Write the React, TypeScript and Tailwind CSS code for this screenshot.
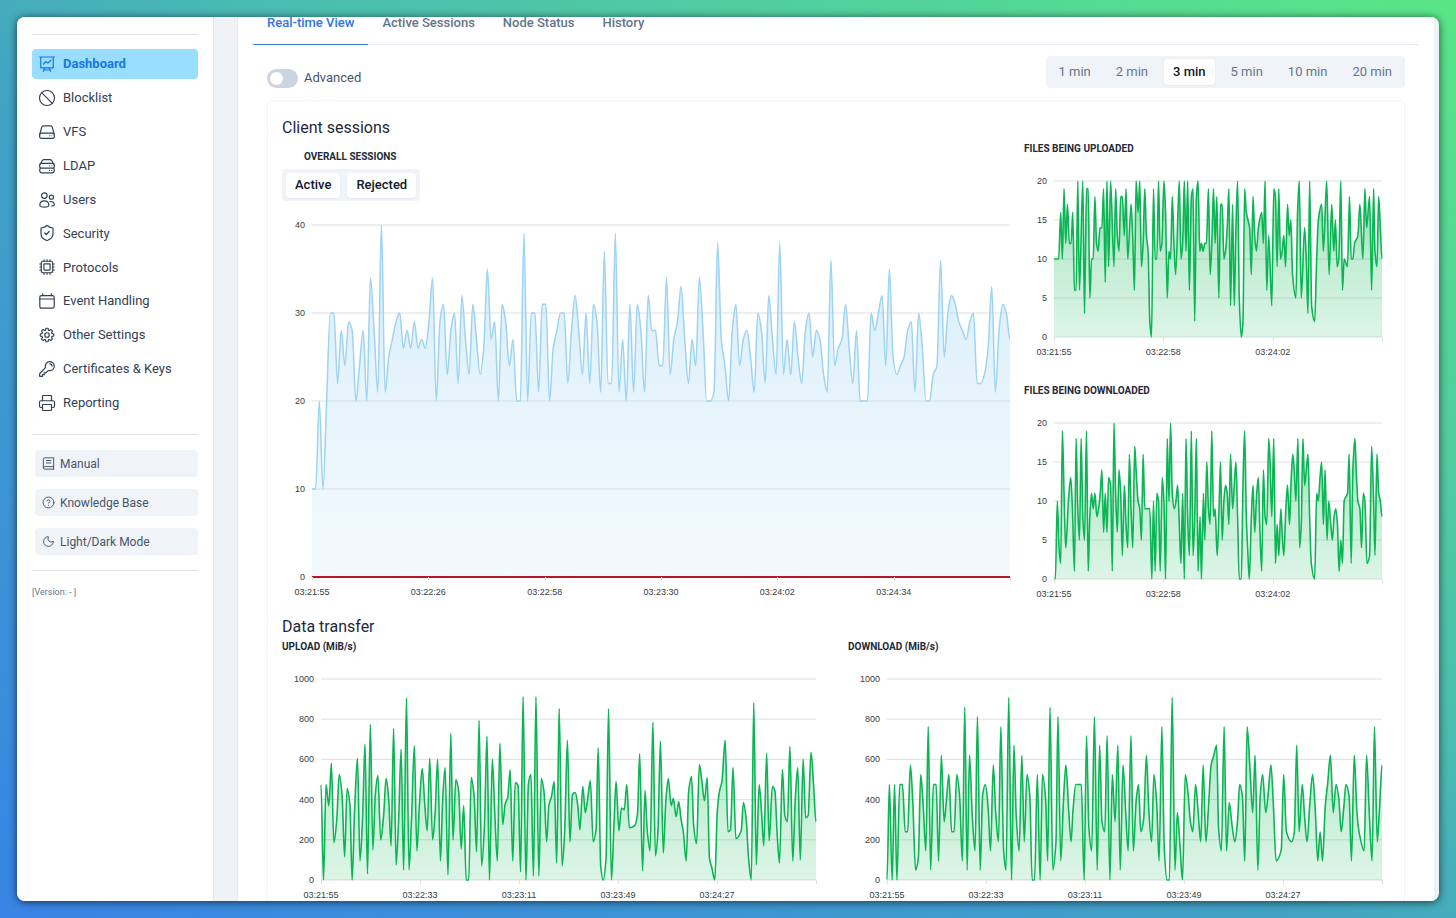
import { useState } from "react";
import type { ComponentType, ReactNode } from "react";
import { ShieldCheck, Printer, CircleHelp, Moon, Ban } from "lucide-react";
import { HiOutlineCog8Tooth, HiOutlineKey } from "react-icons/hi2";

type IconProps = { className?: string };

function Glyph({ children, className }: { children: ReactNode; className?: string }) {
  return (
    <svg viewBox="0 0 24 24" fill="none" stroke="currentColor" strokeWidth="1.8" strokeLinecap="round" strokeLinejoin="round" className={className} aria-hidden="true">
      {children}
    </svg>
  );
}

const BoardIcon = (p: IconProps) => (
  <Glyph {...p}>
    <path d="M.9 1.5h22.2M2.6 1.5v16.2h18.8V1.5M6.8 12l3.2-3.6 3.4 2.2 4.8-4.4M9 17.7 6.4 23M15 17.7l2.6 5.3M7.6 21h8.8" />
  </Glyph>
);
const DriveIcon = (p: IconProps) => (
  <Glyph {...p}>
    <rect x="1" y="13.6" width="22" height="8" rx="2.6" />
    <path d="M1.2 15.4 4 5a3 3 0 0 1 2.9-2.2h10.2A3 3 0 0 1 20 5l2.8 10.4M15.6 17.6h.1M19.2 17.6h.1" />
  </Glyph>
);
const DrivesIcon = (p: IconProps) => (
  <Glyph {...p}>
    <rect x="1" y="8" width="22" height="7.2" rx="2.6" />
    <path d="M2 9 5 3.8A3 3 0 0 1 7.5 2.4h9A3 3 0 0 1 19 3.8L22 9M2.2 15.2C.4 17 .6 22.2 3.6 22.2h16.8c3 0 3.2-5.2 1.4-7M15.6 11.6h.1M19.2 11.6h.1M15.6 18.7h.1M19.2 18.7h.1" />
  </Glyph>
);
const PeopleIcon = (p: IconProps) => (
  <Glyph {...p}>
    <circle cx="8" cy="5.4" r="4.2" />
    <path d="M8 13.2c4 0 6.8 2.5 6.8 6.2 0 2-2 3.2-6.8 3.2s-6.8-1.200-6.8-3.2c0-3.7 2.8-6.2 6.8-6.2Z" />
    <circle cx="18.6" cy="7.8" r="3.1" />
    <path d="M16.5 14.4c3.6-.8 6.5 1.6 6.5 4.4 0 1.6-1.4 2.2-4.4 2.2" />
  </Glyph>
);
const ChipIcon = (p: IconProps) => (
  <Glyph {...p}>
    <rect x="3.4" y="3.4" width="17.2" height="17.2" rx="2.6" />
    <rect x="7.4" y="7.4" width="9.2" height="9.2" rx=".8" />
    <path d="M7.5 3V1.2M12 3V1.2M16.5 3V1.2M7.5 22.8V21M12 22.8V21M16.5 22.8V21M3 7.5H1.2M3 12H1.2M3 16.5H1.2M22.8 7.5H21M22.8 12H21M22.8 16.5H21" />
  </Glyph>
);
const CalendarIcon = (p: IconProps) => (
  <Glyph {...p}>
    <rect x="1.2" y="3.8" width="21.6" height="19" rx="2.4" />
    <path d="M1.2 9h21.6M5.6 3.8V1.2M18.4 3.8V1.2" />
  </Glyph>
);
const BookIcon = (p: IconProps) => (
  <Glyph {...p}>
    <path d="M21.5 18V1.5H5A2.5 2.5 0 0 0 2.5 4v16A2.5 2.5 0 0 0 5 22.5h16.5M2.5 20A2.5 2.5 0 0 1 5 17.8h16.5v4.7M8 6.5h8.5M8 11h8.5" />
  </Glyph>
);

// the library icons carry a margin inside their box, so they are drawn a little larger
const NAV: { label: string; icon: ComponentType<any>; large?: boolean }[] = [
  { label: "Dashboard", icon: BoardIcon },
  { label: "Blocklist", icon: Ban, large: true },
  { label: "VFS", icon: DriveIcon },
  { label: "LDAP", icon: DrivesIcon },
  { label: "Users", icon: PeopleIcon },
  { label: "Security", icon: ShieldCheck, large: true },
  { label: "Protocols", icon: ChipIcon },
  { label: "Event Handling", icon: CalendarIcon },
  { label: "Other Settings", icon: HiOutlineCog8Tooth, large: true },
  { label: "Certificates & Keys", icon: HiOutlineKey, large: true },
  { label: "Reporting", icon: Printer, large: true },
];

const HELP: { label: string; icon: ComponentType<any> }[] = [
  { label: "Manual", icon: BookIcon },
  { label: "Knowledge Base", icon: CircleHelp },
  { label: "Light/Dark Mode", icon: Moon },
];

const TABS = ["Real-time View", "Active Sessions", "Node Status", "History"];
const RANGES = ["1 min", "2 min", "3 min", "5 min", "10 min", "20 min"];

type Point = [number, number];

// "tick:value" pairs
const parse = (s: string): Point[] => s.trim().split(/\s+/).map((p) => p.split(":").map(Number) as Point);

const SESSIONS: Point[] = [
  10, 10, 20, 10, 20, 30, 30, 22, 28, 24, 29, 28, 20, 24, 28, 20, 34, 28, 21, 40, 21, 25, 27, 29, 30, 26, 28, 26, 29, 26, 27, 26,
  29, 34, 20, 29, 31, 23, 28, 30, 22, 32, 27, 23, 31, 27, 23, 26, 35, 27, 29, 20, 31, 29, 24, 27, 20, 20, 39, 20, 30, 30, 21, 31,
  31, 20, 26, 28, 30, 30, 22, 28, 32, 28, 23, 30, 22, 31, 29, 21, 37, 22, 22, 39, 21, 27, 20, 31, 21, 31, 28, 21, 32, 28, 28, 24,
  24, 34, 23, 27, 29, 33, 27, 22, 27, 24, 34, 28, 20, 20, 21, 38, 27, 24, 20, 28, 31, 24, 27, 28, 25, 21, 30, 28, 22, 32, 27, 23,
  38, 23, 27, 23, 29, 25, 22, 28, 30, 25, 28, 27, 23, 21, 36, 24, 26, 27, 31, 26, 22, 28, 20, 20, 20, 30, 28, 30, 32, 24, 35, 25,
  23, 24, 25, 28, 29, 21, 30, 26, 20, 20, 23, 24, 36, 25, 30, 32, 31, 29, 28, 27, 29, 30, 22, 22, 23, 26, 33, 21, 28, 31, 30, 27,
].map((v, i): Point => [i, v]);

const FILES_UP = parse(`
105:10 119:10 125:16 130:10 135:19 140:12 145:17 151:12 156:12 161:16 166:6 171:6 176:20 181:6 191:20 196:3 202:19 207:19
212:5 217:10 222:10 227:18 232:12 237:11 242:14 248:14 253:19 258:7 263:20 268:9 274:20 284:9 289:19 294:13 299:11 304:18
309:18 315:13 320:19 325:10 335:17 340:13 345:6 350:20 356:16 361:20 366:9 371:12 376:19 381:13 386:11 391:2 396:0 402:19
407:10 412:10 417:20 422:11 427:12 433:20 438:16 443:5 448:11 453:10 458:18 463:12 468:8 479:20 484:10 489:12 494:20 499:11
504:20 509:6 515:18 520:19 525:2 530:18 535:20 540:11 545:12 550:11 555:12 560:12 566:19 571:8 576:12 581:19 586:12 591:18
597:5 602:17 607:17 612:10 617:11 622:14 627:19 632:4 638:17 643:4 648:14 653:20 658:5 664:0 669:2 674:19 679:16 684:15
689:14 694:8 699:18 704:13 709:11 715:14 725:16 730:12 735:20 740:6 746:13 755:4 761:19 766:18 771:9 776:19 781:10 786:11
791:13 796:9 802:17 807:13 812:15 817:8 827:5 832:16 837:20 843:5 853:14 858:10 863:3 868:20 874:4 883:2 889:10 894:15
904:17 909:11 919:20 926:8 934:17 940:11 945:15 950:9 955:10 961:20 966:6 971:10 981:9 987:18 992:10 997:10 1002:12 1012:13
1018:17 1027:10 1033:19 1038:14 1047:18 1053:6 1059:19 1063:11 1069:9 1074:18 1079:14 1084:10`);

const FILES_DOWN = parse(`
105:0 109:0 115:10 120:4 125:2 130:19 135:11 140:4 148:10 155:13 160:9 166:1 171:18 176:9 181:5 186:18 191:8 196:5 202:19
207:1 212:8 217:11 222:9 227:11 233:8 238:9 243:11 248:14 253:6 258:11 263:6 268:13 274:12 279:1 284:20 289:11 294:6 299:14
304:11 309:3 315:12 320:7 325:4 330:16 335:9 340:4 346:17 350:14 356:10 361:9 366:5 371:16 376:9 391:9 397:0 402:10 407:1
412:11 417:10 422:1 428:13 433:10 438:0 443:18 448:10 453:20 458:11 464:9 469:10 474:12 479:7 484:2 489:11 494:0 499:18
504:8 509:3 515:19 520:3 525:8 530:18 535:1 541:8 545:0 551:11 555:5 561:15 566:9 571:7 576:19 581:8 586:9 592:3 597:8
602:15 607:5 612:10 617:12 622:11 627:7 632:16 638:9 643:12 648:15 653:8 658:0 664:0 669:12 674:19 679:8 683:4 688:0 694:8
699:12 704:6 710:11 715:13 719:7 725:1 730:14 735:8 740:7 746:18 750:15 755:8 761:18 766:2 771:7 776:3 782:9 787:5 791:3
797:9 802:12 808:7 813:13 818:16 822:14 827:10 833:18 838:4 843:7 848:18 853:12 858:14 863:16 868:8 873:2 883:0 889:11
894:10 899:13 904:15 909:7 914:14 920:5 925:10 931:7 936:5 941:8 946:9 951:7 956:1 961:5 966:2 971:10 981:11 986:16 992:2
997:14 1003:18 1008:13 1012:10 1018:9 1023:4 1028:11 1033:10 1039:2 1047:3 1053:17 1059:10 1063:3 1069:16 1074:11 1079:10 1084:8`);

const UPLOAD = parse(`
145:475 152:0 159:475 167:370 174:580 181:185 189:300 196:525 204:420 211:115 218:455 226:370 232:0 239:350 247:605 254:95
261:300 268:675 275:30 283:775 290:150 297:430 304:520 312:200 320:320 327:505 334:410 341:170 348:755 355:75 362:300 369:650
376:50 384:905 391:50 398:300 406:668 413:145 420:370 428:555 435:380 442:245 449:605 457:200 464:330 471:600 479:95 485:390
492:560 500:25 508:730 514:200 522:500 530:440 537:155 544:370 551:0 558:0 565:510 573:420 580:140 587:795 594:70 602:270
609:715 616:0 624:600 631:330 638:95 645:680 653:275 660:380 667:410 674:550 681:95 688:485 696:470 703:40 710:912 718:0
725:480 732:525 739:20 746:912 754:20 761:505 769:430 776:190 782:370 790:420 797:490 804:85 811:853 819:70 826:230 834:695
841:190 848:425 856:435 863:370 869:250 877:465 884:335 891:410 898:495 906:190 914:250 920:658 927:70 934:0 942:110 949:853
957:0 964:270 970:490 978:245 985:358 993:350 1000:475 1007:260 1022:270 1030:330 1036:628 1044:45 1051:445 1057:250 1065:145
1073:785 1080:120 1087:240 1094:690 1102:135 1109:390 1116:505 1124:370 1130:405 1138:315 1145:390 1152:300 1158:240 1166:95
1173:440 1181:515 1187:270 1195:180 1203:575 1210:490 1217:395 1225:510 1231:110 1238:60 1246:0 1253:340 1259:440 1266:490
1275:695 1283:240 1290:250 1297:560 1305:205 1320:245 1326:385 1334:300 1340:120 1348:0 1355:882 1362:75 1370:475 1377:330
1383:170 1391:630 1398:195 1407:465 1414:445 1421:210 1427:85 1435:550 1442:320 1449:290 1456:665 1464:95 1471:400 1478:560
1485:100 1493:600 1500:310 1507:320 1515:635 1522:480 1529:290`);

const DOWNLOAD = parse(`
132:0 138:475 145:0 151:475 157:0 164:475 171:475 178:240 184:240 191:572 197:390 204:50 211:110 217:525 223:380 230:145
236:762 242:50 249:475 256:475 262:95 269:620 276:290 282:400 288:525 295:240 301:240 308:525 315:420 322:95 328:860 334:50
340:620 347:320 354:145 360:812 367:50 373:420 380:475 387:360 393:145 400:572 406:340 413:190 419:762 426:150 432:50 439:908
446:0 452:670 458:310 465:145 472:620 478:190 485:525 492:420 498:0 504:0 511:525 518:0 524:525 532:400 537:95 543:860 550:50
558:190 563:812 570:95 577:400 583:572 590:350 596:190 601:350 608:475 622:475 629:0 635:717 641:260 648:145 655:812 662:50
668:670 674:290 681:240 687:717 694:0 700:525 707:290 714:670 720:50 727:572 734:330 740:145 747:717 753:145 760:390 766:475
772:240 779:300 786:620 792:350 799:190 805:525 812:380 818:95 825:762 831:160 838:0 844:0 851:908 858:50 864:335 871:160
877:0 884:525 891:430 897:290 903:240 910:475 916:350 923:190 929:572 936:190 943:380 949:570 956:620 963:670 968:260 975:145
982:762 988:145 995:385 1002:270 1009:190 1016:300 1021:475 1028:420 1034:95 1040:762 1047:560 1054:335 1060:620 1067:50
1073:420 1079:525 1087:335 1093:430 1100:572 1106:380 1113:95 1126:150 1132:525 1139:240 1152:190 1159:240 1165:670 1171:240
1179:475 1185:310 1191:190 1198:380 1205:525 1212:340 1218:95 1224:240 1230:95 1237:370 1243:480 1250:620 1257:335 1264:475
1271:410 1277:240 1284:370 1289:475 1297:420 1303:95 1310:620 1317:330 1323:230 1335:145 1341:620 1348:330 1355:95 1361:762
1368:190 1374:370 1380:572`);

// monotone cubic: flat tangents on every peak and valley
function linePath(points: Point[], max: number) {
  const x0 = points[0][0];
  const span = points[points.length - 1][0] - x0;
  const pts = points.map(([x, v]): Point => [((x - x0) / span) * 1000, 1000 - (v / max) * 1000]);
  const slope = (i: number) => (pts[i + 1][1] - pts[i][1]) / (pts[i + 1][0] - pts[i][0]);
  const tangents = pts.map((_, i) => {
    if (i === 0 || i === pts.length - 1) return 0;
    const a = slope(i - 1);
    const b = slope(i);
    return a * b <= 0 ? 0 : (2 * a * b) / (a + b);
  });
  let d = `M${pts[0][0]},${pts[0][1]}`;
  for (let i = 1; i < pts.length; i++) {
    const [xa, ya] = pts[i - 1];
    const [xb, yb] = pts[i];
    const h = (xb - xa) / 3;
    d += `C${(xa + h).toFixed(2)},${(ya + tangents[i - 1] * h).toFixed(2)} ${(xb - h).toFixed(2)},${(yb - tangents[i] * h).toFixed(2)} ${xb.toFixed(2)},${yb.toFixed(2)}`;
  }
  return d;
}

function AreaChart({ id, points, max, yLabels, xLabels, color, fade, stroke, plotClass, axisClass, indentClass, baseline }: {
  id: string; points: Point[]; max: number; yLabels: number[]; xLabels: string[];
  color: string; fade: [number, number, number]; stroke: number;
  plotClass: string; axisClass: string; indentClass: string; baseline?: string;
}) {
  const line = linePath(points, max);
  return (
    <div className="mt-6 font-['Liberation_Sans',Arial,sans-serif] text-[9px] leading-3 text-[#373d3f]">
      <div className="flex">
        <div className={`mr-[7px] flex shrink-0 flex-col justify-between ${axisClass}`}>
          {yLabels.map((y) => (
            <span key={y} className="flex h-0 items-center justify-end">{y}</span>
          ))}
        </div>
        <svg viewBox="0 0 1000 1000" preserveAspectRatio="none" className={`block w-full min-w-0 flex-1 overflow-visible ${plotClass}`} role="img" aria-label={id}>
          <defs>
            <linearGradient id={id} x1="0" y1="0" x2="0" y2="1000" gradientUnits="userSpaceOnUse">
              <stop offset="0" stopColor={color} stopOpacity={fade[0]} />
              <stop offset=".5" stopColor={color} stopOpacity={fade[1]} />
              <stop offset="1" stopColor={color} stopOpacity={fade[2]} />
            </linearGradient>
          </defs>
          {yLabels.map((y) => (
            <line key={y} x1="0" x2="1000" y1={1000 - (y / max) * 1000} y2={1000 - (y / max) * 1000} stroke="#e0e0e0" vectorEffect="non-scaling-stroke" />
          ))}
          <path d={`${line}L1000,1000L0,1000Z`} fill={`url(#${id})`} />
          <path d={line} fill="none" stroke={color} strokeWidth={stroke} strokeLinejoin="round" vectorEffect="non-scaling-stroke" />
          {baseline && <line x1="0" x2="1000" y1="1000" y2="1000" stroke={baseline} strokeWidth="2" vectorEffect="non-scaling-stroke" />}
        </svg>
      </div>
      <div className={indentClass}>
        <div className="flex h-1 justify-between">
          {[...xLabels, ""].map((t) => (
            <span key={t} className="-mr-px w-px bg-[#e0e0e0]" />
          ))}
        </div>
        <div className="mt-[5px] flex h-3 justify-between">
          {[...xLabels, ""].map((t) => (
            <span key={t} className="flex w-0 justify-center whitespace-nowrap">{t}</span>
          ))}
        </div>
      </div>
    </div>
  );
}

const GREEN = "#0ab653";
const GREEN_FADE: [number, number, number] = [0.5, 0.25, 0.14];

function ChartTitle({ children }: { children: ReactNode }) {
  return <h3 className="text-[10px] font-bold leading-4 text-[#1e293b]">{children}</h3>;
}

function FilesChart({ id, title, points }: { id: string; title: string; points: Point[] }) {
  return (
    <section className="mt-[25px]">
      <ChartTitle>{title}</ChartTitle>
      <AreaChart id={id} points={points} max={20} yLabels={[20, 15, 10, 5, 0]} xLabels={["03:21:55", "03:22:58", "03:24:02"]}
        color={GREEN} fade={GREEN_FADE} stroke={1.6} plotClass="h-[156px]" axisClass="w-[23px]" indentClass="pl-[30px]" />
    </section>
  );
}

function TransferChart({ id, title, points }: { id: string; title: string; points: Point[] }) {
  return (
    <section>
      <ChartTitle>{title}</ChartTitle>
      <AreaChart id={id} points={points} max={1000} yLabels={[1000, 800, 600, 400, 200, 0]}
        xLabels={["03:21:55", "03:22:33", "03:23:11", "03:23:49", "03:24:27"]}
        color={GREEN} fade={GREEN_FADE} stroke={1.6} plotClass="h-[201px]" axisClass="w-8" indentClass="pl-[39px]" />
    </section>
  );
}

function Sidebar() {
  return (
    <aside className="w-[197px] shrink-0 border-r border-[#e2e8f0] bg-white px-[15px] pt-[17px]">
      <hr className="border-[#dfe4ea]" />
      <nav className="mt-[14px] flex h-[369px] flex-col justify-between">
        {NAV.map(({ label, icon: Icon, large }, i) => (
          <a
            key={label}
            href="#"
            className={
              i === 0
                ? "flex h-[30px] items-center gap-2 rounded bg-[#99ddff] pl-[7px] text-[13px] font-bold text-[#1677e8]"
                : "flex h-[30px] items-center gap-2 rounded pl-[7px] text-[13px] text-[#334155]"
            }
          >
            <Icon className={large ? "-mx-px size-[18px] shrink-0" : "size-4 shrink-0"} strokeWidth={1.6} />
            {label}
          </a>
        ))}
      </nav>
      <hr className="mt-4 border-[#dfe4ea]" />
      <div className="mt-[15px] flex flex-col gap-3 pl-[3px]">
        {HELP.map(({ label, icon: Icon }) => (
          <button key={label} type="button" className="flex h-[27px] items-center gap-[5px] rounded bg-[#f0f4f9] pl-[7px] text-xs text-[#475569]">
            <Icon className="size-[13px] shrink-0" strokeWidth={1.8} />
            {label}
          </button>
        ))}
      </div>
      <hr className="mt-[15px] border-[#dfe4ea]" />
      <p className="mt-[15px] text-[9px] leading-3 text-[#64748b]">[Version: - ]</p>
    </aside>
  );
}

export default function App() {
  const [tab, setTab] = useState(TABS[0]);
  const [range, setRange] = useState("3 min");
  const [advanced, setAdvanced] = useState(false);

  return (
    <div className="h-screen bg-[linear-gradient(to_top_right,#3884e6,#42a3c4_45%,#4bbdb0_60%,#5ae687)] p-[17px] font-[Roboto,sans-serif]">
      <div className="flex h-full overflow-hidden rounded-lg bg-[#eff3f8] shadow-[0_1px_8px_rgba(0,0,0,0.65)]">
        <Sidebar />

        <main className="ml-[23px] mr-[5px] min-w-0 flex-1 border-l border-[#e6ebf2] bg-white px-[15px]">
          {/* Tabs */}
          <div role="tablist" className="-mt-1 flex border-b border-[#e2e8f0]">
            {TABS.map((t) => (
              <button
                key={t}
                type="button"
                role="tab"
                aria-selected={t === tab}
                onClick={() => setTab(t)}
                className={
                  t === tab
                    ? "-mb-px border-b border-[#3b7de0] px-[14px] pb-[11px] text-[13px] font-medium leading-5 text-[#2f74e8]"
                    : "-mb-px border-b border-transparent px-[14px] pb-[11px] text-[13px] font-medium leading-5 text-[#64748b]"
                }
              >
                {t}
              </button>
            ))}
          </div>

          {/* Controls */}
          <div className="mx-[14px] mt-[11px] flex items-end justify-between">
            <label className="flex items-center gap-[6px] text-[13px] leading-5 text-[#475569]">
              <input
                type="checkbox"
                checked={advanced}
                onChange={(e) => setAdvanced(e.target.checked)}
                className="h-[19px] w-[31px] appearance-none rounded-full bg-[#cbd5e1] p-[3px] before:block before:size-[13px] before:rounded-full before:bg-white checked:bg-[#3b82f6] checked:before:ml-3"
              />
              Advanced
            </label>
            <div className="flex h-8 items-center gap-[7px] rounded bg-[#f0f4f9] px-1">
              {RANGES.map((r) => (
                <button
                  key={r}
                  type="button"
                  onClick={() => setRange(r)}
                  className={
                    r === range
                      ? "h-[26px] rounded bg-white px-[9px] text-[13px] font-medium text-[#0f172a] shadow-xs"
                      : "h-[26px] rounded px-[9px] text-[13px] text-[#64748b]"
                  }
                >
                  {r}
                </button>
              ))}
            </div>
          </div>

          {/* Charts */}
          <div className="mx-[14px] mt-3 rounded-md border border-[#f1f4f8] pb-6 pl-[14px] pr-[22px] pt-[15px]">
            <div className="grid grid-cols-[minmax(0,728fr)_minmax(0,358fr)] gap-x-[14px]">
              <section>
                <h2 className="text-base leading-6 text-[#1e293b]">Client sessions</h2>
                <div className="mt-[9px] pl-[22px]">
                  <ChartTitle>OVERALL SESSIONS</ChartTitle>
                </div>
                <div className="mt-1 inline-flex h-8 items-center gap-[7px] rounded bg-[#f0f4f9] px-1 align-top">
                  <button type="button" className="h-[25px] rounded bg-white px-[9px] text-[13px] font-medium text-[#0f172a] shadow-xs">Active</button>
                  <button type="button" className="h-[25px] rounded bg-white px-[9px] text-[13px] font-medium text-[#0f172a] shadow-xs">Rejected</button>
                </div>
                <AreaChart
                  id="sessions"
                  points={SESSIONS}
                  max={40}
                  yLabels={[40, 30, 20, 10, 0]}
                  xLabels={["03:21:55", "03:22:26", "03:22:58", "03:23:30", "03:24:02", "03:24:34"]}
                  color="#9dd3f3"
                  fade={[0.4, 0.25, 0.12]}
                  stroke={1.5}
                  plotClass="h-[352px]"
                  axisClass="w-[23px]"
                  indentClass="pl-[30px]"
                  baseline="#b8152b"
                />
              </section>
              <div>
                <FilesChart id="files-uploaded" title="FILES BEING UPLOADED" points={FILES_UP} />
                <FilesChart id="files-downloaded" title="FILES BEING DOWNLOADED" points={FILES_DOWN} />
              </div>
            </div>

            <h2 className="mt-[15px] text-base leading-6 text-[#1e293b]">Data transfer</h2>
            <div className="grid grid-cols-2 gap-8">
              <TransferChart id="upload" title="UPLOAD (MiB/s)" points={UPLOAD} />
              <TransferChart id="download" title="DOWNLOAD (MiB/s)" points={DOWNLOAD} />
            </div>
          </div>
        </main>
      </div>
    </div>
  );
}
